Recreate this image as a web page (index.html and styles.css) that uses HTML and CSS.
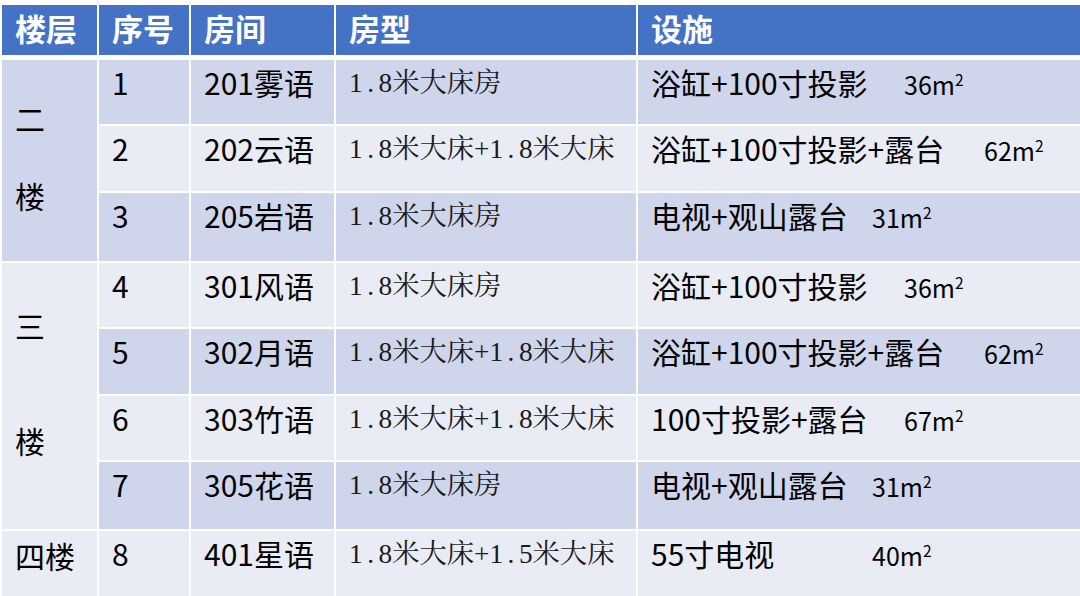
FILE: index.html
```html
<!DOCTYPE html>
<html lang="zh-CN">
<head>
<meta charset="utf-8">
<title>房型表</title>
<link rel="stylesheet" href="styles.css">
</head>
<body>
<div class="table">
  <div class="h">楼层</div>
  <div class="h">序号</div>
  <div class="h">房间</div>
  <div class="h">房型</div>
  <div class="h">设施</div>

  <div class="c floor f2 d"><span>二</span><span>楼</span></div>
  <div class="c d">1</div>
  <div class="c d">201雾语</div>
  <div class="c type d">1<span class="dot">.</span>8米大床房</div>
  <div class="c d"><span class="ft wb">浴缸+100寸投影</span><span class="area">36m<span class="sup">2</span></span></div>

  <div class="c l">2</div>
  <div class="c l">202云语</div>
  <div class="c type l">1<span class="dot">.</span>8米大床+1<span class="dot">.</span>8米大床</div>
  <div class="c l"><span class="ft wc">浴缸+100寸投影+露台</span><span class="area">62m<span class="sup">2</span></span></div>

  <div class="c d">3</div>
  <div class="c d">205岩语</div>
  <div class="c type d">1<span class="dot">.</span>8米大床房</div>
  <div class="c d"><span class="ft wa">电视+观山露台</span><span class="area">31m<span class="sup">2</span></span></div>

  <div class="c floor f3 l"><span>三</span><span>楼</span></div>
  <div class="c l">4</div>
  <div class="c l">301风语</div>
  <div class="c type l">1<span class="dot">.</span>8米大床房</div>
  <div class="c l"><span class="ft wb">浴缸+100寸投影</span><span class="area">36m<span class="sup">2</span></span></div>

  <div class="c d">5</div>
  <div class="c d">302月语</div>
  <div class="c type d">1<span class="dot">.</span>8米大床+1<span class="dot">.</span>8米大床</div>
  <div class="c d"><span class="ft wc">浴缸+100寸投影+露台</span><span class="area">62m<span class="sup">2</span></span></div>

  <div class="c l">6</div>
  <div class="c l">303竹语</div>
  <div class="c type l">1<span class="dot">.</span>8米大床+1<span class="dot">.</span>8米大床</div>
  <div class="c l"><span class="ft wb">100寸投影+露台</span><span class="area">67m<span class="sup">2</span></span></div>

  <div class="c d">7</div>
  <div class="c d">305花语</div>
  <div class="c type d">1<span class="dot">.</span>8米大床房</div>
  <div class="c d"><span class="ft wa">电视+观山露台</span><span class="area">31m<span class="sup">2</span></span></div>

  <div class="c floor f4 l"><span>四楼</span></div>
  <div class="c l">8</div>
  <div class="c l">401星语</div>
  <div class="c type l">1<span class="dot">.</span>8米大床+1<span class="dot">.</span>5米大床</div>
  <div class="c l"><span class="ft wa">55寸电视</span><span class="area">40m<span class="sup">2</span></span></div>
</div>
</body>
</html>
```

FILE: styles.css
```css
html, body {
  margin: 0;
  padding: 0;
  background: #ffffff;
  overflow: hidden;
}

.table {
  display: grid;
  grid-template-columns: 95px 90px 143px 300px 442px;
  grid-template-rows: 53px 64px 65px 68px 64px 65px 64px 67px 65px;
  column-gap: 2px;
  row-gap: 2px;
  padding: 5px 0 0 2px;
  font-family: "Noto Sans CJK SC", "Noto Sans", sans-serif;
  color: #000000;
}

.h {
  align-self: start;
  height: 50px;
  background: #4472c4;
  color: #ffffff;
  font-weight: bold;
  font-size: 31px;
  line-height: 46px;
  padding-left: 13px;
  white-space: nowrap;
}

.c {
  font-size: 30px;
  line-height: 40px;
  padding: 2px 0 0 13px;
  white-space: nowrap;
  box-sizing: border-box;
}

.d { background: #cfd5ea; }
.l { background: #e9ebf5; }

.floor {
  display: flex;
  flex-direction: column;
}
.f2 { grid-row: 2 / span 3; padding-top: 38px; gap: 37px; }
.f3 { grid-row: 5 / span 4; padding-top: 42px; gap: 75px; }
.f4 { grid-row: 9 / span 1; padding-top: 4px; }

.type {
  font-family: "Liberation Serif", "Noto Serif CJK SC", "Noto Sans CJK SC", serif;
  font-size: 27.3px;
  color: #1a1a1a;
  padding-top: 3px;
}
.dot {
  padding: 0 4.5px;
}

.ft { display: inline-block; }
.wa { width: 221px; }
.wb { width: 253px; }
.wc { width: 333px; }

.area {
  font-size: 25px;
}
.sup {
  font-size: 0.62em;
  vertical-align: 0.6em;
  line-height: 0;
}
```
